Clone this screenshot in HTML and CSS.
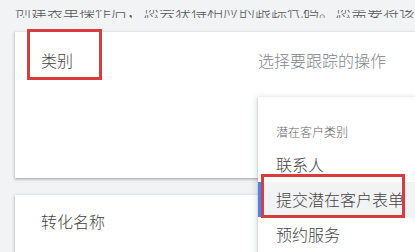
FILE: index.html
```html
<!DOCTYPE html>
<html lang="zh-CN">
<head>
<meta charset="utf-8">
<link rel="stylesheet" href="styles.css">
</head>
<body>
<div class="intro"><p class="intro-text">创建表单操作后，您会获得相应的跟踪代码。您需要将该代码添加到您的网站中。</p></div>
<section class="card card-category">
  <div class="field-row">
    <div class="field-label">类别</div>
    <div class="field-value">选择要跟踪的操作</div>
  </div>
  <span class="annot annot-label"></span>
  <div class="menu">
    <div class="menu-header">潜在客户类别</div>
    <div class="menu-item">联系人</div>
    <div class="menu-item selected">提交潜在客户表单</div>
    <div class="menu-item">预约服务</div>
    <span class="annot annot-item"></span>
  </div>
</section>
<section class="card card-name">
  <div class="field-row">
    <div class="field-label">转化名称</div>
  </div>
</section>
</body>
</html>
```
FILE: styles.css
```css
html, body {
  margin: 0;
  padding: 0;
}
body {
  background: #f1f3f4;
  font-family: "Noto Sans CJK SC", "Noto Sans", sans-serif;
  font-weight: 300;
  color: #444;
  width: 415px;
  height: 252px;
  overflow: hidden;
}
.intro {
  margin: 10px 0 0 15px;
  height: 8px;
  overflow: hidden;
}
.intro-text {
  margin: -7px 0 0 0;
  font-size: 16px;
  line-height: 16px;
  white-space: nowrap;
  color: #555;
}
.card {
  position: relative;
  background: #fff;
  margin-left: 15px;
  margin-right: -40px;
  box-shadow: 0 1px 2px rgba(60,64,67,.3), 0 1px 3px 1px rgba(60,64,67,.15);
}
.card-category {
  margin-top: 14px;
  height: 146px;
}
.card-name {
  margin-top: 17px;
  height: 80px;
}
.field-row {
  display: flex;
  padding: 16px 0 0 26px;
  font-size: 16px;
  line-height: 24px;
}
.card-name .field-row {
  padding-top: 14px;
}
.field-label {
  width: 217px;
}
.field-value {
  color: #80868b;
}
.annot {
  position: absolute;
  border: 3px solid #d93c3c;
  box-sizing: border-box;
  pointer-events: none;
}
.annot-label {
  left: 12px;
  top: -3px;
  width: 75px;
  height: 51px;
}
.menu {
  position: absolute;
  z-index: 10;
  left: 243px;
  top: 65px;
  width: 220px;
  height: 200px;
  background: #fff;
  box-shadow: 0 2px 6px 2px rgba(60,64,67,.15), 0 1px 2px rgba(60,64,67,.3);
  padding-top: 26px;
  box-sizing: border-box;
}
.menu-header {
  font-size: 12px;
  line-height: 18px;
  color: #666;
  padding-left: 18px;
  margin-bottom: 6px;
}
.menu-item {
  font-size: 16px;
  line-height: 35px;
  height: 35px;
  padding-left: 18px;
  color: #444;
  white-space: nowrap;
}
.menu-item.selected {
  background: #f1f3f4;
  box-shadow: inset 3px 0 0 #4285f4;
}
.annot-item {
  left: 3px;
  top: 77px;
  width: 144px;
  height: 44px;
}
```
